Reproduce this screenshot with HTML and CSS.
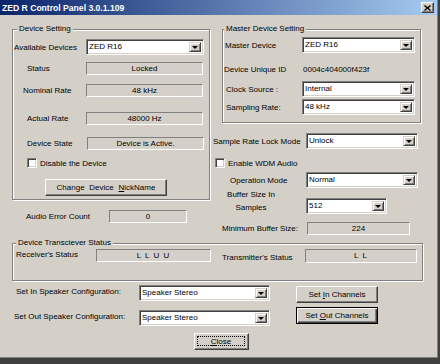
FILE: index.html
```html
<!DOCTYPE html>
<html lang="en">
<head>
    <meta charset="UTF-8">
    <title>ZED R Control Panel 3.0.1.109</title>
    <link rel="stylesheet" href="styles.css">
</head>
<body>
<div class="window">
    <div class="titlebar">
        <span class="title">ZED R Control Panel 3.0.1.109</span>
        <span class="close-x">
            <svg viewBox="0 0 7 6" width="7" height="6"><path d="M0.5 0.5l6 5M6.5 0.5l-6 5" stroke="#000" stroke-width="1.4"/></svg>
        </span>
    </div>

    <div class="top">
        <!-- left column -->
        <div class="col-left">
            <div class="group dev-group">
                <span class="group-title">Device Setting</span>
                <div class="row mt9"><span class="lbl pl1">Available Devices</span><div class="combo w118"><span class="combo-text">ZED R16</span><span class="combo-btn"></span></div></div>
                <div class="row mt7"><span class="lbl pl14">Status</span><div class="field w117">Locked</div></div>
                <div class="row mt9"><span class="lbl pl10">Nominal Rate</span><div class="field w117">48 kHz</div></div>
                <div class="row mt15"><span class="lbl pl14">Actual Rate</span><div class="field w117">48000 Hz</div></div>
                <div class="row mt12"><span class="lbl pl14">Device State</span><div class="field w117 ml1">Device is Active.</div></div>
                <div class="row mt8 check-row pl14"><span class="check"></span><span>Disable the Device</span></div>
                <div class="row mt11"><div class="btn nick-btn"><span>Change Device <u>N</u>ickName</span></div></div>
            </div>
            <div class="row mt10 audio-row"><span class="lbl">Audio Error Count</span><div class="field w78">0</div></div>
        </div>

        <!-- right column -->
        <div class="col-right">
            <div class="group master-group">
                <span class="group-title">Master Device Setting</span>
                <div class="row mt7"><span class="lbl pl2">Master Device</span><div class="combo w113"><span class="combo-text">ZED R16</span><span class="combo-btn"></span></div></div>
                <div class="row mt10 value-row"><span class="lbl pl1">Device Unique ID</span><span class="value">0004c404000f423f</span></div>
                <div class="row mt5"><span class="lbl pl3">Clock Source :</span><div class="combo w113"><span class="combo-text">Internal</span><span class="combo-btn"></span></div></div>
                <div class="row mt2"><span class="lbl pl3">Sampling Rate:</span><div class="combo w113"><span class="combo-text">48 kHz</span><span class="combo-btn"></span></div></div>
            </div>
            <div class="row mt10 wide"><span class="lbl pl1">Sample Rate Lock Mode</span><div class="combo w112"><span class="combo-text">Unlock</span><span class="combo-btn"></span></div></div>
            <div class="row mt9 check-row pl3"><span class="check"></span><span>Enable WDM Audio</span></div>
            <div class="row mt4 wide"><span class="lbl pl18">Operation Mode</span><div class="combo w112"><span class="combo-text">Normal</span><span class="combo-btn"></span></div></div>
            <div class="row buffer-row"><span class="buffer-lbl">Buffer Size In<br>Samples</span><div class="combo w81"><span class="combo-text">512</span><span class="combo-btn"></span></div></div>
            <div class="row mt8 wide"><span class="lbl min-lbl">Minimum Buffer Size:</span><div class="field w103">224</div></div>
        </div>
    </div>

    <div class="group trans-group">
        <span class="group-title">Device Transciever Status</span>
        <div class="row mt5 trans-row">
            <span class="lbl rx-lbl">Receiver's Status</span>
            <div class="field w115 spaced">L L U U</div>
            <span class="lbl tx-lbl">Transmitter's Status</span>
            <div class="field w112 h14 spaced">L L</div>
        </div>
    </div>

    <div class="bottom">
        <div class="speaker-rows">
            <div class="row mt4 spk-row"><span class="lbl pl4">Set In Speaker Configuration:</span><div class="combo w131"><span class="combo-text">Speaker Stereo</span><span class="combo-btn"></span></div></div>
            <div class="row mt9 spk-row"><span class="lbl pl2">Set Out Speaker Configuration:</span><div class="combo w131"><span class="combo-text">Speaker Stereo</span><span class="combo-btn"></span></div></div>
        </div>
        <div class="channel-btns">
            <div class="btn mt5"><span>Set <u>I</u>n Channels</span></div>
            <div class="btn default mt4"><span>Set <u>O</u>ut Channels</span></div>
        </div>
    </div>

    <div class="btn close-btn"><span class="focus"><span><u>C</u>lose</span></span></div>
</div>
</body>
</html>
```

FILE: styles.css
```css
* {
    margin: 0;
    padding: 0;
    box-sizing: border-box;
}

body {
    width: 440px;
    height: 364px;
    overflow: hidden;
    background: #404040;
    font-family: "Liberation Sans", Arial, sans-serif;
    font-size: 8px;
    color: #000;
}

.window {
    width: 438px;
    height: 358px;
    background: #d4d0c8;
    border-right: 1px solid #808080;
    border-bottom: 1px solid #808080;
}

.titlebar {
    height: 15px;
    display: flex;
    align-items: center;
    justify-content: space-between;
    padding: 0 3px 0 2px;
    background: linear-gradient(to right, #0a246a, #a6caf0);
}

.title {
    color: #fff;
    font-weight: bold;
    font-size: 8.6px;
}

.close-x {
    width: 13px;
    height: 11px;
    display: flex;
    align-items: center;
    justify-content: center;
    background: #d4d0c8;
    border: 1px solid;
    border-color: #fff #404040 #404040 #fff;
    box-shadow: inset -1px -1px #808080;
}

.close-x svg {
    display: block;
}

/* layout blocks */
.top {
    display: flex;
    height: 214px;
    margin-top: 14px;
    padding-left: 12px;
}

.col-left {
    width: 198px;
}

.col-right {
    width: 210px;
    margin-left: 2px;
}

.row {
    display: flex;
    align-items: center;
}

.lbl {
    flex-shrink: 0;
    white-space: nowrap;
}

/* group box with etched edge */
.group {
    position: relative;
    border: 1px solid #808080;
    box-shadow: inset 1px 1px #fff, 1px 1px #fff;
}

.group-title {
    position: absolute;
    top: -6px;
    left: 4px;
    padding: 0 2px;
    line-height: 10px;
    background: #d4d0c8;
}

.dev-group {
    width: 198px;
    height: 171px;
}

.dev-group .lbl {
    width: 73px;
}

.master-group {
    width: 199px;
    height: 94px;
    margin-left: 10px;
}

.master-group .group-title {
    left: 1px;
}

.master-group .lbl {
    width: 79px;
}

.value-row {
    height: 13px;
}

.value {
    padding-left: 1px;
}

.wide .lbl {
    width: 94px;
}

.min-lbl {
    padding-left: 10px;
    width: 95px !important;
}

.buffer-row {
    align-items: flex-start;
}

.buffer-lbl {
    width: 78px;
    line-height: 13px;
    text-align: center;
}

.buffer-row .combo {
    margin-top: 10px;
    margin-left: 16px;
}

.audio-row .lbl {
    width: 97px;
    padding-left: 14px;
}

.trans-group {
    width: 411px;
    height: 38px;
    margin-left: 12px;
}

.trans-group .group-title {
    left: 3px;
}

.trans-row {
    align-items: flex-start;
}

.rx-lbl {
    width: 83px;
    padding-left: 3px;
    line-height: 12px;
}

.tx-lbl {
    width: 83px;
    margin-left: 11px;
    margin-top: 3px;
    line-height: 12px;
}

.spaced {
    letter-spacing: 1px;
}

.bottom {
    display: flex;
    margin-left: 12px;
}

.spk-row {
    align-items: flex-start;
}

.spk-row .lbl {
    width: 127px;
    line-height: 13px;
}

.channel-btns {
    width: 82px;
    margin-left: 26px;
}

/* controls */
.field {
    height: 13px;
    border: 1px solid;
    border-color: #808080 #fff #fff #808080;
    text-align: center;
    line-height: 11px;
    white-space: nowrap;
}

.combo {
    display: flex;
    height: 16px;
    padding: 2px;
    background: #fff;
    border: 1px solid;
    border-color: #808080 #fff #fff #808080;
    box-shadow: inset 1px 1px #404040, inset -1px -1px #d4d0c8;
}

.combo-text {
    flex: 1;
    line-height: 10px;
    white-space: nowrap;
}

.combo-btn {
    width: 12px;
    display: flex;
    align-items: center;
    justify-content: center;
    background: #d4d0c8;
    border: 1px solid;
    border-color: #d4d0c8 #404040 #404040 #d4d0c8;
    box-shadow: inset 1px 1px #fff, inset -1px -1px #808080;
}

.combo-btn::after {
    content: "";
    border-left: 3px solid transparent;
    border-right: 3px solid transparent;
    border-top: 3px solid #000;
}

.check-row {
    height: 10px;
    gap: 3px;
}

.check {
    width: 10px;
    height: 10px;
    background: #fff;
    border: 1px solid;
    border-color: #808080 #fff #fff #808080;
    box-shadow: inset 1px 1px #404040, inset -1px -1px #d4d0c8;
}

.btn {
    height: 17px;
    display: flex;
    align-items: center;
    justify-content: center;
    white-space: nowrap;
    background: #d4d0c8;
    border: 1px solid;
    border-color: #fff #404040 #404040 #fff;
    box-shadow: inset -1px -1px #808080;
}

.btn.default {
    border-color: #000;
    box-shadow: inset 1px 1px #fff, inset -1px -1px #404040, inset -2px -2px #808080;
}

.nick-btn {
    width: 122px;
    margin-left: 32px;
    word-spacing: 2.5px;
}

.close-btn {
    width: 55px;
    margin-top: 7px;
    margin-left: 194px;
    padding: 2px 3px 3px 2px;
}

.focus {
    width: 100%;
    height: 100%;
    display: flex;
    align-items: center;
    justify-content: center;
    border: 1px dotted #000;
}

/* sizes and spacing */
.w78 { width: 78px; }
.w81 { width: 81px; }
.w103 { width: 103px; }
.w112 { width: 112px; }
.w113 { width: 113px; }
.w115 { width: 115px; }
.w117 { width: 117px; }
.w118 { width: 118px; }
.w131 { width: 131px; }
.h14 { height: 14px; }
.ml1 { margin-left: 1px; }

.mt2 { margin-top: 2px; }
.mt4 { margin-top: 4px; }
.mt5 { margin-top: 5px; }
.mt7 { margin-top: 7px; }
.mt8 { margin-top: 8px; }
.mt9 { margin-top: 9px; }
.mt10 { margin-top: 10px; }
.mt11 { margin-top: 11px; }
.mt12 { margin-top: 12px; }
.mt15 { margin-top: 15px; }

.pl1 { padding-left: 1px; }
.pl2 { padding-left: 2px; }
.pl3 { padding-left: 3px; }
.pl4 { padding-left: 4px; }
.pl10 { padding-left: 10px; }
.pl14 { padding-left: 14px; }
.pl18 { padding-left: 18px; }
```
